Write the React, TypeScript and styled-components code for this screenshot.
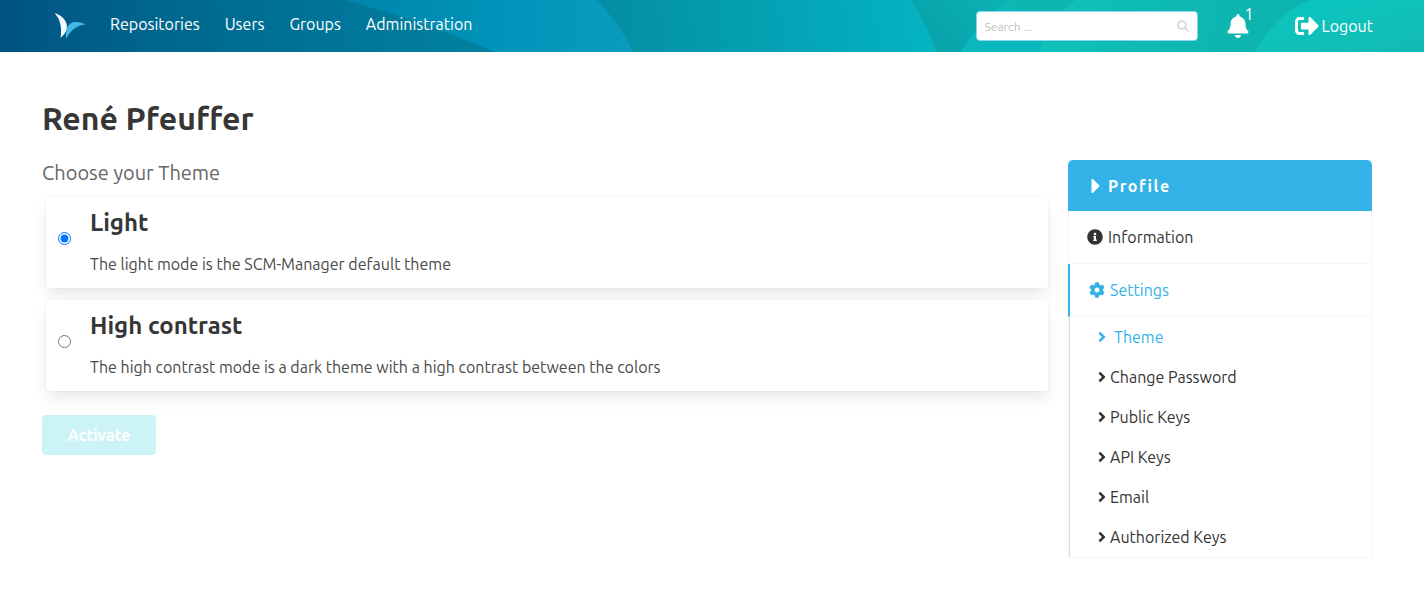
import React, { useState } from "react";
import styled, { createGlobalStyle } from "styled-components";
import { FaAngleRight, FaBell, FaCaretRight, FaCog, FaInfoCircle, FaSearch, FaSignOutAlt } from "react-icons/fa";

const GlobalStyle = createGlobalStyle`
  *, *::before, *::after { box-sizing: border-box; }
  body {
    margin: 0;
    background: #fff;
    color: #363636;
    font-family: Ubuntu, "Noto Sans", "Open Sans", sans-serif;
    font-size: 16px;
    line-height: 24px;
  }
  h1, h2, h3, p, ul { margin: 0; padding: 0; }
  ul { list-style: none; }
  a { color: inherit; text-decoration: none; }
  button, input { font-family: inherit; }
`;

const Header = styled.header`
  position: relative;
  display: flex;
  align-items: center;
  height: 52px;
  padding: 0 51px 0 54px;
  background: #0593a5;
  color: #fff;
`;

const Backdrop = styled.svg`
  position: absolute;
  inset: 0;
  width: 100%;
  height: 100%;
`;

const Brand = styled.a`
  position: relative;
  display: flex;
  width: 32px;
  margin-right: 24px;
`;

const MainNav = styled.nav`
  position: relative;
  display: flex;
  flex: 1;
  gap: 25px;
  padding-bottom: 4px;
`;

const Tools = styled.div`
  position: relative;
  display: flex;
  align-items: center;
`;

const SearchBox = styled.label`
  display: flex;
  align-items: center;
  width: 222px;
  height: 30px;
  padding: 0 8px;
  border: 1px solid #8fd5ea;
  border-radius: 4px;
  background: #fff;
  color: #dbdbdb;
`;

const SearchInput = styled.input`
  flex: 1;
  min-width: 0;
  padding: 0;
  border: 0;
  outline: 0;
  background: transparent;
  color: #363636;
  font-size: 12px;
  &::placeholder { color: #bfbfbf; opacity: 1; }
`;

const BellButton = styled.button`
  position: relative;
  display: flex;
  margin: 0 45px 0 28px;
  padding: 0;
  border: 0;
  background: none;
  color: #fff;
`;

const Badge = styled.span`
  position: absolute;
  left: 19px;
  top: -12px;
  font-size: 16px;
  line-height: 24px;
`;

const LogoutLink = styled.a`
  display: flex;
  align-items: center;
  gap: 3px;
`;

const Page = styled.main`
  padding: 48px 52px 32px 42px;
`;

const Title = styled.h1`
  font-size: 32px;
  line-height: 36px;
  font-weight: 700;
  margin-bottom: 24px;
`;

const Columns = styled.div`
  display: grid;
  grid-template-columns: minmax(0, 1fr) 304px;
  gap: 20px;
  align-items: start;
`;

const Subtitle = styled.h2`
  font-size: 20px;
  line-height: 25px;
  font-weight: 400;
  color: #666;
  margin-bottom: 12px;
`;

const Options = styled.div`
  display: grid;
  gap: 12px;
  padding-left: 4px;
  margin-bottom: 24px;
`;

const OptionCard = styled.label`
  display: flex;
  align-items: center;
  gap: 19px;
  padding: 8px 12px 12px;
  border-radius: 4px;
  background: #fff;
  box-shadow: 0 8px 16px -2px rgba(10, 10, 10, 0.1), 0 0 0 1px rgba(10, 10, 10, 0.02);
`;

const Radio = styled.input`
  width: 13px;
  height: 13px;
  margin: 0 0 4px;
`;

const OptionName = styled.h3`
  font-size: 24px;
  line-height: 35px;
  font-weight: 700;
`;

const OptionText = styled.p`
  padding-top: 12px;
  color: #4a4a4a;
`;

const Activate = styled.button`
  height: 40px;
  width: 114px;
  padding: 0;
  border: 0;
  border-radius: 4px;
  background: #ccf3f6;
  color: #fff;
  font-size: 16px;
  font-weight: 700;
`;

const Menu = styled.aside`
  color: #333;
`;

const MenuHead = styled.div`
  display: flex;
  align-items: center;
  height: 51px;
  padding-left: 16px;
  border-radius: 5px 5px 0 0;
  background: #33b2e8;
  color: #fff;
  font-weight: 700;
  letter-spacing: 0.1em;
`;

const MenuList = styled.ul`
  border: 1px solid #f5f5f5;
  border-top: 0;
`;

const MenuLink = styled.a<{ $active?: boolean }>`
  display: flex;
  align-items: center;
  gap: 5px;
  height: 53px;
  margin-left: -1px;
  padding-left: 19px;
  border-bottom: 1px solid #f5f5f5;
  ${(p) => p.$active && "border-left: 2px solid #33b2e8; color: #33b2e8;"}
`;

const SubList = styled.ul`
  border-left: 1px solid #dbdbdb;
`;

const SubLink = styled.a<{ $active?: boolean }>`
  display: flex;
  align-items: center;
  gap: ${(p) => (p.$active ? 4 : 0)}px;
  height: 40px;
  padding-left: 24px;
  color: ${(p) => (p.$active ? "#33b2e8" : "inherit")};
`;

const THEMES = [
  { id: "light", name: "Light", text: "The light mode is the SCM-Manager default theme" },
  {
    id: "contrast",
    name: "High contrast",
    text: "The high contrast mode is a dark theme with a high contrast between the colors",
  },
];

const SETTINGS = ["Theme", "Change Password", "Public Keys", "API Keys", "Email", "Authorized Keys"];

function HeaderBackdrop() {
  return (
    <Backdrop viewBox="0 0 1424 52" preserveAspectRatio="none" aria-hidden="true">
      <defs>
        <linearGradient id="base" gradientUnits="userSpaceOnUse" x1="0" y1="52" x2="520" y2="20">
          <stop offset="0" stopColor="#005282" />
          <stop offset="0.3" stopColor="#00668e" />
          <stop offset="0.65" stopColor="#007599" />
          <stop offset="1" stopColor="#0385a0" />
        </linearGradient>
        <linearGradient id="wave" gradientUnits="userSpaceOnUse" x1="345" y1="0" x2="633" y2="0">
          <stop offset="0" stopColor="#0085ac" />
          <stop offset="0.5" stopColor="#0092b8" />
          <stop offset="1" stopColor="#0a9cc0" />
        </linearGradient>
        <linearGradient id="teal" gradientUnits="userSpaceOnUse" x1="615" y1="52" x2="930" y2="0">
          <stop offset="0" stopColor="#048fa5" />
          <stop offset="1" stopColor="#04b4c2" />
        </linearGradient>
        <linearGradient id="edge" gradientUnits="userSpaceOnUse" x1="936" y1="52" x2="990" y2="0">
          <stop offset="0" stopColor="#08a2ab" />
          <stop offset="1" stopColor="#0bb0b4" />
        </linearGradient>
        <linearGradient id="peak" x1="0" y1="0" x2="0" y2="1">
          <stop offset="0" stopColor="#0bbab8" />
          <stop offset="1" stopColor="#08b8bd" />
        </linearGradient>
        <linearGradient id="dome" gradientUnits="userSpaceOnUse" x1="1065" y1="0" x2="1230" y2="52">
          <stop offset="0" stopColor="#0fc0ba" />
          <stop offset="1" stopColor="#0eb5b0" />
        </linearGradient>
        <linearGradient id="glow" gradientUnits="userSpaceOnUse" x1="1330" y1="0" x2="1345" y2="60">
          <stop offset="0" stopColor="#0cc4bf" />
          <stop offset="1" stopColor="#12bcb4" />
        </linearGradient>
      </defs>
      <path fill="url(#base)" d="M0 0H640V52H0Z" />
      <path fill="url(#teal)" d="M597 0H940V52H620Z" />
      <path fill="url(#wave)" d="M345 0H597Q620 25 633 52H495Q425 22 345 0Z" />
      <path fill="url(#edge)" d="M911 0Q927 25 936 52H1060V0Z" />
      <path fill="#0eb5b2" d="M1008 0H1424V52H1060Z" />
      <path fill="url(#peak)" d="M960 52Q980 23 1008 0L1060 52Z" />
      <path fill="url(#dome)" d="M1040 52Q1050 18 1076 0H1424V52Z" />
      <path fill="#0cc0bf" d="M1038 52L1044 42L1050 52Z" />
      <path fill="url(#glow)" d="M1255 52Q1275 15 1310 0H1424V52Z" />
    </Backdrop>
  );
}

export default function App() {
  const [theme, setTheme] = useState("light");
  return (
    <>
      <GlobalStyle />
      <Header>
        <HeaderBackdrop />
        <Brand href="#" aria-label="SCM-Manager">
          <svg width="32" height="28" viewBox="0 0 32 28">
            <path fill="#f5f7fa" d="M0.500 1C8 3 13 9 13 15C13 19 10 23 6.500 26C8 17 7 8 0.500 1Z" />
            <path fill="#43b9e8" d="M12 27C11 18 14 10 21 10Q27 9.500 31.500 12.500C23 13 17 18 12 27Z" />
          </svg>
        </Brand>
        <MainNav>
          <a href="#">Repositories</a>
          <a href="#">Users</a>
          <a href="#">Groups</a>
          <a href="#">Administration</a>
        </MainNav>
        <Tools>
          <SearchBox>
            <SearchInput type="text" placeholder="Search ..." aria-label="Search" />
            <FaSearch size={12} />
          </SearchBox>
          <BellButton type="button" aria-label="Notifications">
            <FaBell size={24} />
            <Badge>1</Badge>
          </BellButton>
          <LogoutLink href="#">
            <FaSignOutAlt size={24} />
            Logout
          </LogoutLink>
        </Tools>
      </Header>
      <Page>
        <Title>René Pfeuffer</Title>
        <Columns>
          <section>
            <Subtitle>Choose your Theme</Subtitle>
            <Options>
              {THEMES.map((t) => (
                <OptionCard key={t.id}>
                  <Radio type="radio" name="theme" checked={theme === t.id} onChange={() => setTheme(t.id)} />
                  <div>
                    <OptionName>{t.name}</OptionName>
                    <OptionText>{t.text}</OptionText>
                  </div>
                </OptionCard>
              ))}
            </Options>
            <Activate type="button" disabled>
              Activate
            </Activate>
          </section>
          <Menu>
            <MenuHead>
              <FaCaretRight size={24} />
              Profile
            </MenuHead>
            <MenuList>
              <li>
                <MenuLink href="#">
                  <FaInfoCircle size={16} />
                  Information
                </MenuLink>
              </li>
              <li>
                <MenuLink href="#" $active>
                  <FaCog size={16} />
                  Settings
                </MenuLink>
                <SubList>
                  {SETTINGS.map((s) => (
                    <li key={s}>
                      <SubLink href="#" $active={s === "Theme"}>
                        <FaAngleRight size={16} />
                        {s}
                      </SubLink>
                    </li>
                  ))}
                </SubList>
              </li>
            </MenuList>
          </Menu>
        </Columns>
      </Page>
    </>
  );
}
